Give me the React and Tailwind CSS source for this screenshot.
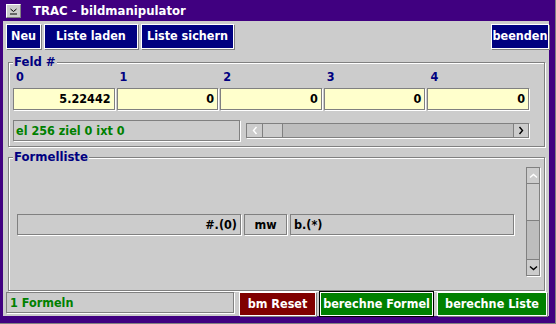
import React from "react";

const Chev = ({ dir, color }) => {
  const pts = {
    left: "4.5,1 1.5,4.5 4.5,8",
    right: "1.5,1 4.5,4.5 1.5,8",
    up: "1,4.5 4.5,1.5 8,4.5",
    down: "1,1.5 4.5,4.5 8,1.5",
  }[dir];
  const horiz = dir === "left" || dir === "right";
  return (
    <svg width={horiz ? 6 : 9} height={horiz ? 9 : 6} viewBox={horiz ? "0 0 6 9" : "0 0 9 6"}>
      <polyline points={pts} fill="none" stroke={color} strokeWidth="1.4" />
    </svg>
  );
};

const Btn = ({ className = "", children }) => (
  <div
    className={`flex items-center justify-center border border-white shadow-[1px_1px_0_#808080] text-white leading-none ${className}`}
  >
    {children}
  </div>
);

const Group = ({ title, className = "", children }) => (
  <fieldset
    className={`ml-[2px] w-[537px] border border-[#808080] shadow-[inset_1px_1px_0_#ffffff,1px_1px_0_#ffffff] px-[4px] ${className}`}
  >
    <legend className="px-px bg-[#cccccc] text-[#000080] text-[13px] leading-[14px]">{title}</legend>
    {children}
  </fieldset>
);

const fields = ["5.22442", "0", "0", "0", "0"];

export default function App() {
  return (
    <div className="w-[556px] h-[324px] bg-[#808080] pr-px pb-px font-['DejaVu_Sans_Condensed','DejaVu_Sans',sans-serif] text-[12.5px] font-bold">
      <div className="h-full bg-[#400080] flex flex-col pl-[3px] pr-[6px] pb-[7px]">
        {/* title bar */}
        <div className="h-[21px] shrink-0 flex items-center pl-[3px]">
          <div className="w-[15px] h-[14px] bg-[#cccccc] border border-t-white border-l-white border-b-[#808080] border-r-[#808080] flex items-center justify-center">
            <svg width="9" height="8" viewBox="0 0 9 8">
              <polyline points="1.5,2 4.5,4.5 7.5,2" fill="none" stroke="#000" />
              <line x1="1" y1="7" x2="8" y2="7" stroke="#000" />
            </svg>
          </div>
          <span className="ml-[12px] text-white text-[13px] leading-none">TRAC - bildmanipulator</span>
        </div>

        <div className="flex-1 min-h-0 bg-[#cccccc] flex flex-col pl-[3px] pt-[3px]">
          {/* toolbar */}
          <div className="flex h-[25px] shrink-0">
            <Btn className="w-[35px] bg-[#000080]">Neu</Btn>
            <Btn className="ml-[3px] w-[94px] bg-[#000080]">Liste laden</Btn>
            <Btn className="ml-[3px] w-[93px] bg-[#000080]">Liste sichern</Btn>
            <Btn className="ml-auto w-[58px] bg-[#000080]">beenden</Btn>
          </div>

          {/* Feld # */}
          <Group title="Feld #" className="mt-[6px] h-[92px] shrink-0">
            <div className="grid grid-cols-5 gap-x-[2px] w-[516px]">
              {fields.map((v, i) => (
                <div key={i}>
                  <div className="h-[15px] leading-[15px] pl-[3px] text-[#000080]">{i}</div>
                  <div className="mt-[4px] h-[22px] border border-[#808080] shadow-[1px_1px_0_#ffffff] bg-[#ffffcc] text-black text-right pr-[3px] leading-[20px]">
                    {v}
                  </div>
                </div>
              ))}
            </div>
            <div className="mt-[10px] flex items-center">
              <div className="w-[227px] h-[21px] border border-[#808080] shadow-[1px_1px_0_#ffffff] text-[#008000] pl-[2px] leading-[19px]">
                el 256 ziel 0 ixt 0
              </div>
              <div className="ml-[6px] w-[283px] h-[15px] flex border border-[#808080] shadow-[1px_1px_0_#ffffff] bg-[#bdbdbd]">
                <div className="w-[16px] bg-[#cccccc] border-r border-[#808080] flex items-center justify-center">
                  <Chev dir="left" color="#ffffff" />
                </div>
                <div className="w-[20px] bg-[#cccccc] border-r border-[#808080]" />
                <div className="flex-1" />
                <div className="w-[15px] bg-[#cccccc] border-l border-[#808080] flex items-center justify-center">
                  <Chev dir="right" color="#000000" />
                </div>
              </div>
            </div>
          </Group>

          {/* Formelliste */}
          <Group title="Formelliste" className="mt-[3px] flex-1 min-h-0">
            <div className="flex items-start pl-[4px]">
              <div className="pt-[50px] flex">
                <div className="w-[224px] h-[21px] border border-[#808080] shadow-[1px_1px_0_#ffffff] text-black text-right pr-[3px] leading-[19px]">
                  #.(0)
                </div>
                <div className="ml-[3px] w-[43px] h-[21px] border border-[#808080] shadow-[1px_1px_0_#ffffff] text-black text-center leading-[19px]">
                  mw
                </div>
                <div className="ml-[3px] w-[224px] h-[21px] border border-[#808080] shadow-[1px_1px_0_#ffffff] text-black pl-[3px] leading-[19px]">
                  b.(*)
                </div>
              </div>
              <div className="ml-[12px] mt-[3px] w-[14px] h-[109px] flex flex-col border border-[#808080] shadow-[1px_1px_0_#ffffff] bg-[#bdbdbd]">
                <div className="h-[16px] bg-[#cccccc] border-b border-[#808080] flex items-center justify-center">
                  <Chev dir="up" color="#ffffff" />
                </div>
                <div className="h-[37px] bg-[#cccccc] border-b border-[#808080]" />
                <div className="flex-1" />
                <div className="h-[16px] bg-[#cccccc] border-t border-[#808080] flex items-center justify-center">
                  <Chev dir="down" color="#000000" />
                </div>
              </div>
            </div>
          </Group>

          {/* status / actions */}
          <div className="mt-px h-[24px] shrink-0 flex items-start">
            <div className="w-[228px] h-[21px] border border-[#808080] shadow-[1px_1px_0_#ffffff] text-[#008000] pl-[3px] leading-[19px]">
              1 Formeln
            </div>
            <Btn className="ml-[5px] w-[77px] h-[24px] bg-[#800000]">bm Reset</Btn>
            <Btn className="ml-[4px] w-[113px] h-[24px] bg-[#008000] outline outline-black">berechne Formel</Btn>
            <Btn className="ml-[4px] w-[110px] h-[24px] bg-[#008000]">berechne Liste</Btn>
          </div>
        </div>
      </div>
    </div>
  );
}
